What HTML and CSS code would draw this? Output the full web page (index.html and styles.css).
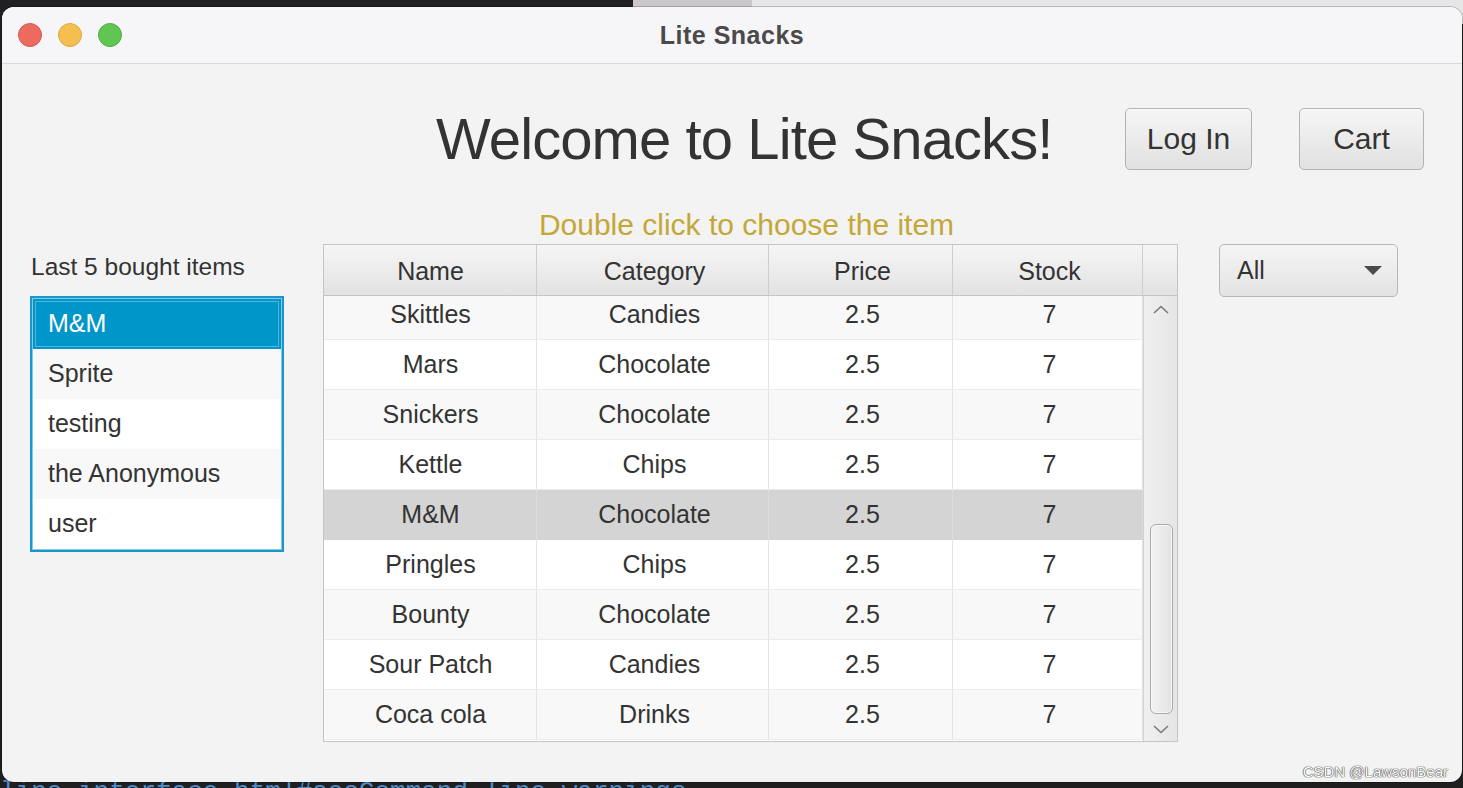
FILE: index.html
```html
<!DOCTYPE html>
<html lang="en">
<head>
<meta charset="utf-8">
<title>Lite Snacks</title>
<link rel="stylesheet" href="styles.css">
</head>
<body>
<div class="desktop">
  <div class="backdrop">
    <div class="bd-dark"></div>
    <div class="bd-tab"></div>
    <div class="bd-light"></div>
  </div>
  <div class="code-peek">line_interface.html#secCommand_line_warnings</div>

  <div class="window">
    <div class="titlebar">
      <div class="lights">
        <span class="light red"></span>
        <span class="light yellow"></span>
        <span class="light green"></span>
      </div>
      <div class="title">Lite Snacks</div>
      <div></div>
    </div>

    <div class="content">
      <div class="top-row">
        <h1 class="welcome">Welcome to Lite Snacks!</h1>
        <div class="actions">
          <button class="btn btn-login">Log In</button>
          <button class="btn btn-cart">Cart</button>
        </div>
      </div>

      <div class="main-row">
        <div class="history">
          <div class="history-label">Last 5 bought items</div>
          <div class="history-list">
            <div class="history-item selected">M&amp;M</div>
            <div class="history-item">Sprite</div>
            <div class="history-item">testing</div>
            <div class="history-item">the Anonymous</div>
            <div class="history-item">user</div>
          </div>
        </div>

        <div class="catalog">
          <div class="hint">Double click to choose the item</div>
          <div class="table">
            <div class="thead">
              <div class="th">Name</div>
              <div class="th">Category</div>
              <div class="th">Price</div>
              <div class="th">Stock</div>
              <div class="th corner"></div>
            </div>
            <div class="tbody">
              <div class="rows">
                <div class="rows-inner">
                  <div class="tr"><div class="td">Skittles</div><div class="td">Candies</div><div class="td">2.5</div><div class="td">7</div></div>
                  <div class="tr"><div class="td">Mars</div><div class="td">Chocolate</div><div class="td">2.5</div><div class="td">7</div></div>
                  <div class="tr"><div class="td">Snickers</div><div class="td">Chocolate</div><div class="td">2.5</div><div class="td">7</div></div>
                  <div class="tr"><div class="td">Kettle</div><div class="td">Chips</div><div class="td">2.5</div><div class="td">7</div></div>
                  <div class="tr selected"><div class="td">M&amp;M</div><div class="td">Chocolate</div><div class="td">2.5</div><div class="td">7</div></div>
                  <div class="tr"><div class="td">Pringles</div><div class="td">Chips</div><div class="td">2.5</div><div class="td">7</div></div>
                  <div class="tr"><div class="td">Bounty</div><div class="td">Chocolate</div><div class="td">2.5</div><div class="td">7</div></div>
                  <div class="tr"><div class="td">Sour Patch</div><div class="td">Candies</div><div class="td">2.5</div><div class="td">7</div></div>
                  <div class="tr"><div class="td">Coca cola</div><div class="td">Drinks</div><div class="td">2.5</div><div class="td">7</div></div>
                </div>
              </div>
              <div class="vscroll">
                <div class="sb-btn sb-up">
                  <svg width="16" height="9" viewBox="0 0 16 9"><path d="M1 8 L8 1.5 L15 8" fill="none" stroke="#7a7a7a" stroke-width="1.6"/></svg>
                </div>
                <div class="sb-track"><div class="sb-thumb"></div></div>
                <div class="sb-btn sb-down">
                  <svg width="16" height="9" viewBox="0 0 16 9"><path d="M1 1 L8 7.5 L15 1" fill="none" stroke="#7a7a7a" stroke-width="1.6"/></svg>
                </div>
              </div>
            </div>
          </div>
        </div>

        <div class="filter">
          <div class="select"><span class="select-value">All</span><span class="caret"></span></div>
        </div>
      </div>
    </div>

    <div class="watermark">CSDN @LawsonBear</div>
  </div>
</div>
</body>
</html>
```

FILE: styles.css
```css
html, body {
  margin: 0;
  padding: 0;
}

body {
  background: #1f1f1f;
  font-family: "Liberation Sans", Arial, sans-serif;
  overflow: hidden;
}

.desktop {
  position: relative;
  width: 1463px;
  height: 788px;
  overflow: hidden;
  background: #1f1f1f;
}

.backdrop {
  display: flex;
  height: 24px;
}

.bd-dark {
  width: 633px;
  background: #202020;
}

.bd-tab {
  width: 119px;
  background: #cbc7cb;
}

.bd-light {
  flex: 1;
  background: #e6e6e6;
}

.code-peek {
  position: absolute;
  left: 0;
  top: 779px;
  font-family: "Liberation Mono", monospace;
  font-size: 26px;
  line-height: 26px;
  color: #4d8ccc;
  white-space: nowrap;
}

.window {
  position: absolute;
  left: 2px;
  top: 7px;
  width: 1460px;
  height: 775px;
  border-radius: 12px;
  overflow: hidden;
  background: #f3f3f3;
  box-shadow: 0 0 0 1px rgba(0, 0, 0, 0.2);
}

/* Title bar */
.titlebar {
  height: 56px;
  border-bottom: 1px solid #d8d8d8;
  background: #f6f6f8;
  display: grid;
  grid-template-columns: 1fr auto 1fr;
  align-items: center;
}

.lights {
  display: flex;
  gap: 16px;
  padding-left: 16px;
}

.light {
  width: 24px;
  height: 24px;
  border-radius: 50%;
  box-sizing: border-box;
}

.light.red {
  background: #ec6a5e;
  border: 1px solid #d8594e;
}

.light.yellow {
  background: #f4bf4f;
  border: 1px solid #dba83c;
}

.light.green {
  background: #61c554;
  border: 1px solid #4fae43;
}

.title {
  font-size: 25px;
  font-weight: 700;
  letter-spacing: 0.5px;
  color: #4a4a4a;
}

/* Top row */
.top-row {
  display: flex;
  align-items: center;
  height: 62px;
  margin-top: 44px;
  padding-right: 38px;
}

.welcome {
  margin: 0 0 0 434px;
  font-size: 58px;
  font-weight: 400;
  letter-spacing: -0.9px;
  line-height: 62px;
  color: #333333;
}

.actions {
  margin-left: auto;
  display: flex;
  gap: 47px;
}

.btn {
  height: 62px;
  box-sizing: border-box;
  border: 1px solid #b3b3b3;
  border-radius: 5px;
  background: linear-gradient(#f5f5f5, #e1e1e1);
  font-family: "Liberation Sans", Arial, sans-serif;
  font-size: 30px;
  color: #333333;
  padding: 0;
  box-shadow: 0 1px 0 rgba(255, 255, 255, 0.6) inset;
}

.btn-login {
  width: 127px;
}

.btn-cart {
  width: 125px;
}

/* Main row */
.main-row {
  display: flex;
  align-items: flex-start;
  margin-top: 30px;
  padding-left: 28px;
}

.history {
  width: 254px;
  margin-top: 52px;
  margin-right: 39px;
}

.history-label {
  font-size: 24.5px;
  line-height: 28px;
  color: #333333;
  margin-bottom: 15px;
  padding-left: 1px;
  padding-top: 1px;
}

.history-list {
  border: 2px solid #1897cd;
  padding: 1px;
  background: #ffffff;
  box-shadow: inset 0 0 0 1px #86c8e4;
}

.history-item {
  height: 50px;
  line-height: 49px;
  padding-left: 15px;
  font-size: 25px;
  color: #333333;
  background: #ffffff;
}

.history-item:nth-child(even) {
  background: #f8f8f8;
}

.history-item.selected {
  background: #0096c9;
  color: #ffffff;
  box-shadow: inset 0 0 0 2px #0096c9, inset 0 0 0 3px #4fb5db;
}

/* Catalog table */
.catalog {
  width: 855px;
  margin-right: 41px;
}

.hint {
  height: 44px;
  line-height: 44px;
  padding-top: 3px;
  margin-bottom: -3px;
  text-align: center;
  padding-right: 8px;
  font-size: 30px;
  color: #c3a838;
}

.table {
  height: 498px;
  box-sizing: border-box;
  border: 1px solid #c4c4c4;
  background: #ffffff;
  display: flex;
  flex-direction: column;
}

.thead {
  display: grid;
  grid-template-columns: 213px 232px 184px 190px 34px;
  height: 51px;
  box-sizing: border-box;
  border-bottom: 1px solid #c4c4c4;
  background: linear-gradient(#f6f6f6, #e2e2e2);
}

.th {
  display: flex;
  align-items: center;
  justify-content: center;
  border-right: 1px solid #cdcdcd;
  font-size: 25px;
  color: #333333;
  padding-top: 2px;
}

.th:nth-child(n+2),
.td:nth-child(n+2) {
  padding-left: 4px;
}

.th:first-child,
.td:first-child {
  padding-left: 1px;
}

.th.corner {
  border-right: none;
  padding-left: 0;
}

.tbody {
  flex: 1;
  display: flex;
  overflow: hidden;
}

.rows {
  width: 819px;
  overflow: hidden;
}

.rows-inner {
  margin-top: -6px;
}

.tr {
  display: grid;
  grid-template-columns: 213px 232px 184px 190px;
  height: 50px;
  box-sizing: border-box;
  border-bottom: 1px solid #ececec;
  background: #ffffff;
}

.tr:nth-child(odd) {
  background: #f8f8f8;
}

.tr.selected {
  background: #d4d4d4;
  border-bottom-color: #d4d4d4;
}

.td {
  display: flex;
  align-items: center;
  justify-content: center;
  border-right: 1px solid #e4e4e4;
  font-size: 25px;
  color: #333333;
}

.tr.selected .td {
  border-right-color: #dcdcdc;
}

.vscroll {
  width: 34px;
  box-sizing: border-box;
  border-left: 1px solid #d2d2d2;
  background: linear-gradient(90deg, #f0f0f0, #e5e5e5);
  display: flex;
  flex-direction: column;
}

.sb-btn {
  display: flex;
  align-items: center;
  justify-content: center;
}

.sb-up {
  height: 26px;
}

.sb-down {
  height: 23px;
}

.sb-track {
  flex: 1;
}

.sb-thumb {
  margin: 202px 4px 0 6px;
  height: 190px;
  box-sizing: border-box;
  border: 1px solid #a9a9a9;
  border-radius: 6px;
  background: linear-gradient(90deg, #f3f3f3, #e3e3e3);
  box-shadow: inset 0 0 0 1px #f8f8f8;
}

/* Filter dropdown */
.filter {
  margin-top: 44px;
}

.select {
  width: 179px;
  height: 53px;
  box-sizing: border-box;
  border: 1px solid #b8b8b8;
  border-radius: 5px;
  background: linear-gradient(#f5f5f5, #e3e3e3);
  display: flex;
  align-items: center;
  justify-content: space-between;
  padding: 0 15px 0 17px;
  font-size: 25px;
  color: #333333;
}

.caret {
  width: 0;
  height: 0;
  border-left: 9px solid transparent;
  border-right: 9px solid transparent;
  border-top: 9px solid #4a4a4a;
}

.watermark {
  position: absolute;
  right: 14px;
  bottom: 2px;
  font-size: 15px;
  line-height: 17px;
  color: #ffffff;
  text-shadow: 0 0 1px #444444, 0 0 1px #444444, 0 0 1px #444444;
}
```
